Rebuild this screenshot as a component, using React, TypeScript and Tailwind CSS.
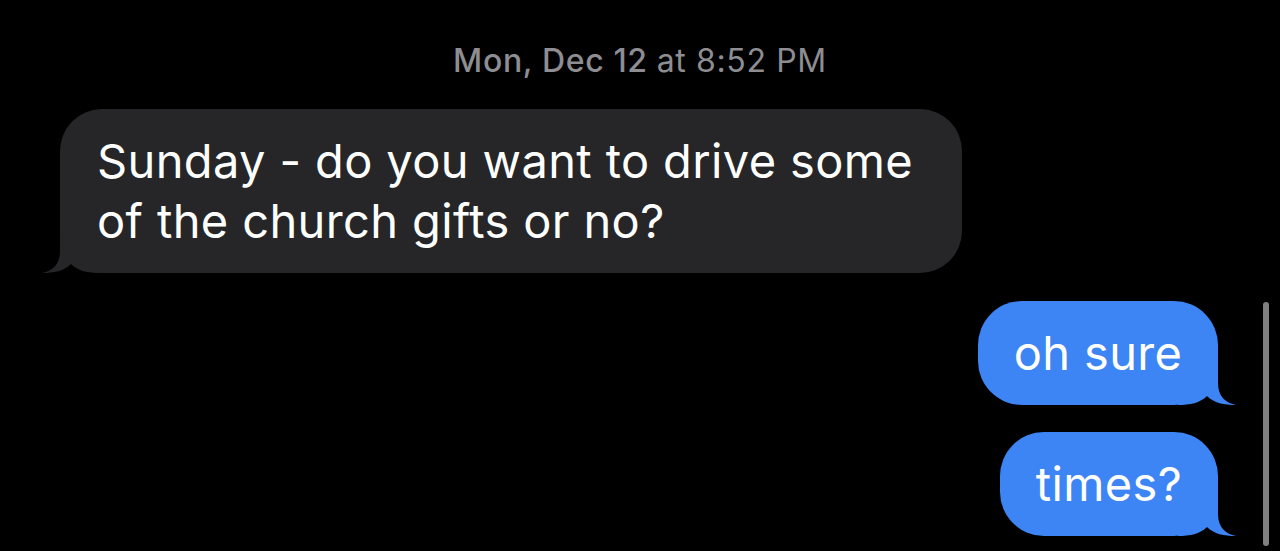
import React from "react";

function Tail({ color, side }: { color: string; side: "left" | "right" }) {
  return (
    <svg
      width="60"
      height="50"
      viewBox="0 0 60 50"
      className={
        side === "left"
          ? "absolute bottom-0 left-[-20px]"
          : "absolute bottom-0 right-[-20px] -scale-x-100"
      }
    >
      <path
        d="M20 0 L20 28 C20 42 12 48 2 50 C14 50 24 48 31 41 C38 48 48 50 60 50 L60 0 Z"
        fill={color}
      />
    </svg>
  );
}

export default function App() {
  return (
    <div
      className="relative w-[1280px] h-[551px] bg-black overflow-hidden"
      style={{ fontFamily: "Inter, 'Noto Sans', sans-serif" }}
    >
      <div className="flex flex-col">
        <div className="mt-[43px] h-[36px] flex items-center justify-center text-[32px] text-[#8d8d92] tracking-[0.02em]">
          <span className="font-medium">Mon, Dec 12</span>
          <span className="ml-[9px]">at 8:52 PM</span>
        </div>
        <div className="mt-[30px] ml-[60px] self-start relative">
          <div className="relative z-10 w-[902px] h-[164px] rounded-[42px] bg-[#262628] pl-[37px] pt-[22px] text-white text-[47px] leading-[60px] tracking-[0.008em]">
            Sunday - do you want to drive some
            <br />
            of the church gifts or no?
          </div>
          <Tail color="#262628" side="left" />
        </div>
        <div className="mt-[28px] mr-[62px] self-end relative">
          <div className="relative z-10 w-[240px] h-[104px] rounded-[44px] bg-[#3d85f5] flex items-center justify-center text-white text-[47px] leading-[60px] tracking-[0.008em]">
            oh sure
          </div>
          <Tail color="#3d85f5" side="right" />
        </div>
        <div className="mt-[27px] mr-[62px] self-end relative">
          <div className="relative z-10 w-[218px] h-[104px] rounded-[44px] bg-[#3d85f5] flex items-center justify-center text-white text-[47px] leading-[60px] tracking-[0.008em]">
            times?
          </div>
          <Tail color="#3d85f5" side="right" />
        </div>
      </div>
      <div className="absolute left-[1263px] top-[302px] w-[6px] h-[244px] rounded-full bg-[#808080]" />
    </div>
  );
}
